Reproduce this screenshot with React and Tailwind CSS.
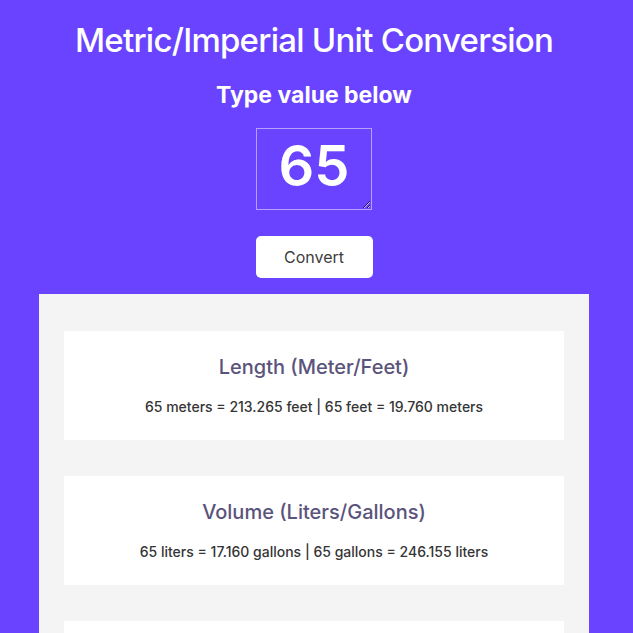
import React, { useState } from "react";

const conversions = [
  { title: "Length (Meter/Feet)", text: "65 meters = 213.265 feet | 65 feet = 19.760 meters" },
  { title: "Volume (Liters/Gallons)", text: "65 liters = 17.160 gallons | 65 gallons = 246.155 liters" },
  { title: "Mass (Kilograms/Pounds)", text: "65 kilos = 143.300 pounds | 65 pounds = 29.484 kilos" },
];

export default function App() {
  const [value, setValue] = useState("65");

  return (
    <div className="h-screen bg-[#6943FF] font-['Inter',sans-serif] flex flex-col items-center overflow-hidden pr-[5px]">
      {/* Header */}
      <h1 className="shrink-0 mt-[18px] text-[33px] leading-[44px] font-medium tracking-[-0.75px] text-white">
        Metric/Imperial Unit Conversion
      </h1>
      <h2 className="shrink-0 mt-[19px] text-[23px] leading-[28px] font-bold text-white">
        Type value below
      </h2>
      <textarea
        value={value}
        onChange={(e) => setValue(e.target.value)}
        className="shrink-0 mt-[19px] w-[116px] h-[82px] bg-transparent border border-[#B5A0FF] text-white text-[56px] leading-[64px] font-semibold text-center pt-[5px] outline-none"
      />
      <button className="shrink-0 mt-[26px] w-[117px] h-[42px] bg-white rounded-[5px] text-[16px] text-[#3D3D3D]">
        Convert
      </button>

      {/* Results */}
      <div className="mt-[16px] w-[550px] bg-[#F4F4F4] px-[25px] pt-[37px] flex flex-col gap-[36px] flex-1 shrink-0">
        {conversions.map((c) => (
          <div key={c.title} className="bg-white h-[109px] shrink-0 flex flex-col items-center pt-[24px]">
            <h3 className="text-[20px] leading-[24px] font-medium text-[#5A537B]">{c.title}</h3>
            <p className="mt-[18px] text-[14px] leading-[20px] font-medium text-[#353535]">{c.text}</p>
          </div>
        ))}
      </div>
    </div>
  );
}
